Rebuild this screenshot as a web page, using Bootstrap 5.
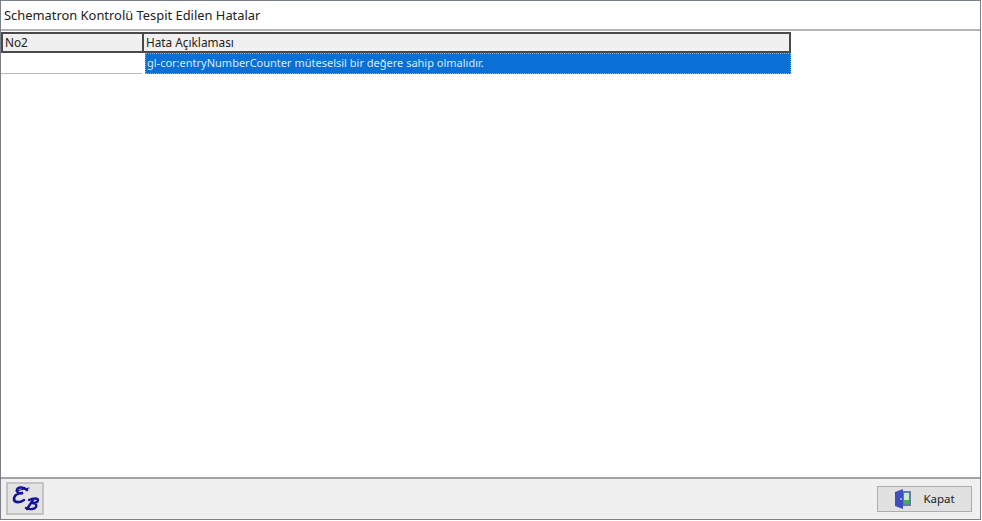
<!DOCTYPE html>
<html lang="tr"><head><meta charset="utf-8"><title>Schematron</title>
<link href="https://cdn.jsdelivr.net/npm/bootstrap@5.3.0/dist/css/bootstrap.min.css" rel="stylesheet">
<style>
html,body{height:100%;margin:0;overflow:hidden;background:#fff}
body{font-family:"Noto Sans","Liberation Sans",sans-serif;font-size:11px;color:#222}
.win{height:520px;width:981px;border:1px solid #7b8088}
.ttl{height:30px;padding:2px 0 0 3px;font-size:12.9px;color:#222;border-bottom:2px solid #b4b4b4;flex:none}
.gridarea{width:790px;padding-top:1px}
.hd{height:21px;background:#f0f0f0;border:2px solid #4a4a4a;font-size:11.8px}
.hd>div{line-height:17px;padding-left:2px}
.c1{width:141px;flex:none}
.hd .c1{border-right:2px solid #4a4a4a}
.rw{height:21px}
.rw .sel{background:#0a70d6;color:#d9ecff;line-height:18px;padding-left:1px;margin-left:3px;border:1px dotted #b9a58e;flex:1}
.rw .c1{border-bottom:1px solid #bbb}
.ft{height:42px;background:#f0f0f0;border-top:2px solid #a3a3a3;padding:3px 8px 0 5px;flex:none}
.ebtn{width:38px;height:33px;background:#e3e3e3;border:2px solid #c4c4c4;display:block}
.kbtn{width:95px;height:26px;background:#e1e1e1;border:1px solid #adadad;font-size:11.5px;color:#222;gap:11px;margin-top:4px;padding:0}
</style></head><body>
<div class="win d-flex flex-column">
<div class="ttl d-flex align-items-center">Schematron Kontrolü Tespit Edilen Hatalar</div>
<div class="flex-grow-1 bg-white">
<div class="gridarea">
<div class="hd d-flex"><div class="c1">No2</div><div class="flex-grow-1">Hata Açıklaması</div></div>
<div class="rw d-flex"><div class="c1"></div><div class="sel">gl-cor:entryNumberCounter müteselsil bir değere sahip olmalıdır.</div></div>
</div></div>
<div class="ft d-flex justify-content-between align-items-start">
<div class="ebtn"><svg width="34" height="29" viewBox="0 0 34 29" fill="none" stroke="#14149a" stroke-linecap="round"><path d="M19 6C15 2 8 3 9 7c.5 2 3 3 6 2-5 0-9 2-9 6 0 4 6 4 10 1" stroke-width="2.600"/><path d="M8 7l13-3" stroke-width="1.200"/><path d="M21 16c4-2 9-2 9 0 0 2-3 3-6 3 3 0 5 1 4 4-1 2-6 3-10 1M25 16l-6 9" stroke-width="2.400"/></svg></div>
<button type="button" class="btn kbtn rounded-0 d-flex align-items-center justify-content-center"><svg width="18" height="20" viewBox="0 0 18 20"><rect x="7" y="2" width="10" height="15" fill="#5a7fa8"/><rect x="10" y="4" width="5" height="11" fill="#cdeccf"/><rect x="10" y="11" width="5" height="4" fill="#49b04d"/><path d="M1 3l8-3v20l-8-3z" fill="#3d4fc0"/><circle cx="7" cy="10" r="1" fill="#b6c4f0"/></svg><span>Kapat</span></button>
</div>
</div>
</body></html>
